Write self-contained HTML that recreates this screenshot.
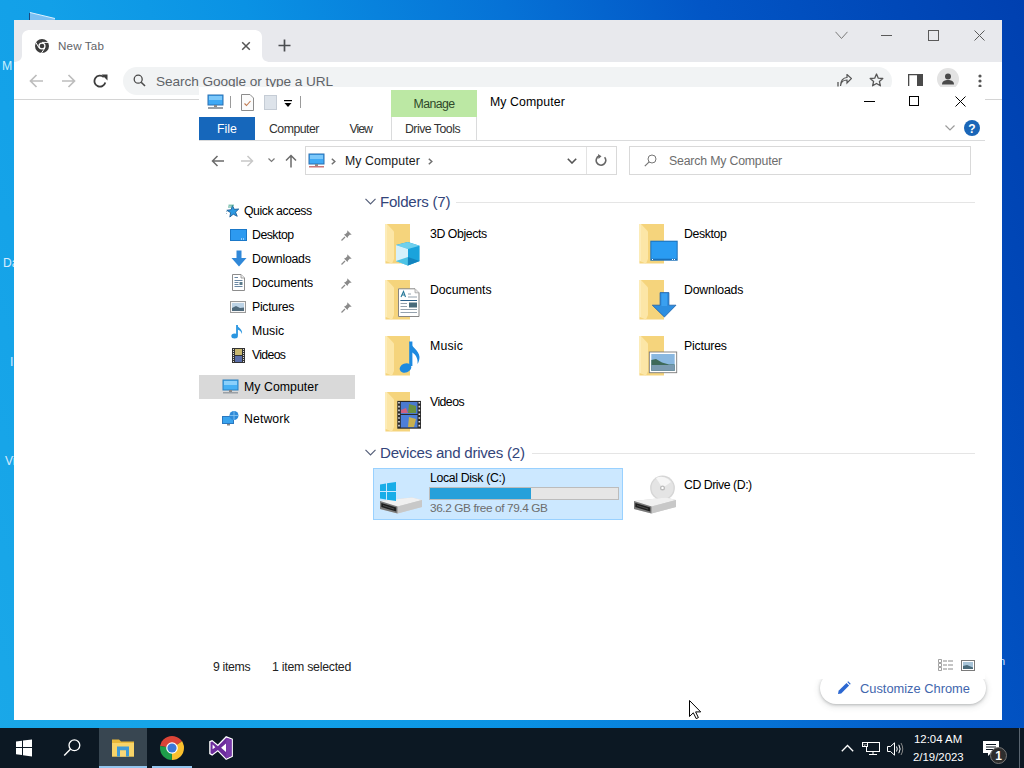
<!DOCTYPE html>
<html><head><meta charset="utf-8">
<style>
*{margin:0;padding:0;box-sizing:border-box}
html,body{width:1024px;height:768px;overflow:hidden}
body{position:relative;font-family:"Liberation Sans",sans-serif;background:linear-gradient(70deg,#1aa8e8 0%,#12a0e8 25%,#0a92e4 40%,#0672d6 60%,#0256c6 75%,#0048b8 90%,#0040b0 100%)}
.a{position:absolute}
.t{position:absolute;white-space:nowrap;font-size:12px;color:#000;line-height:14px}
#chrome{left:14px;top:20px;width:988px;height:700px;background:#fff}
#tabstrip{left:0;top:0;width:988px;height:40px;background:#dfe1e5}
#tab{left:8px;top:9px;width:240px;height:31px;background:#fff;border-radius:8px 8px 0 0}
#toolbar{left:0;top:40px;width:988px;height:39px;background:#fff;border-bottom:1px solid #dadce0}
#omni{left:109px;top:47px;width:870px;height:28px;background:#f1f3f4;border-radius:14px}
#exp{left:199px;top:88px;width:786px;height:591px;background:#fff}
#taskbar{left:0;top:728px;width:1024px;height:40px;background:#0c1823}
</style></head><body>

<!-- desktop labels -->
<div class="t" style="left:2px;top:59px;color:#c8f0ff;font-size:12.3px">M</div>
<div class="t" style="left:3px;top:256px;color:#d8ecff">Da</div>
<div class="t" style="left:10px;top:355px;color:#d8ecff">I</div>
<div class="t" style="left:5px;top:454px;color:#d8ecff">Vi</div>
<div class="t" style="left:999px;top:654px;color:#d8ecff;font-size:11px">n</div>
<svg class="a" style="left:28px;top:11px" width="30" height="10" viewBox="0 0 30 10"><path d="M2 1.5L27 7.5V9H2Z" fill="#7cc0f2"/><path d="M2 1.5L27 7.5" stroke="#d8f0ff" stroke-width="1"/><path d="M1.5 2V9" stroke="#1a4a80" stroke-width="1"/></svg>

<div id="chrome" class="a">
  <div class="a" style="left:0;top:0;width:988px;height:42px;background:#e8e9ed"></div>
  <svg class="a" style="left:0px;top:9px" width="260" height="33" viewBox="0 0 260 33"><path d="M0 33C4 33 8 31 8 26V8C8 3.5 11.5 1 16 1H240C244.5 1 248 3.5 248 8V26C248 31 252 33 256 33Z" fill="#fff"/></svg>
  <div class="a" style="left:0;top:42px;width:988px;height:38px;background:#fff;border-bottom:1px solid #d4d4d4"></div>
  <svg class="a" style="left:20px;top:18px" width="16" height="16" viewBox="0 0 16 16"><circle cx="8" cy="8" r="7" fill="#3c3c3c"/><circle cx="8" cy="8" r="3.6" fill="#fff"/><circle cx="8" cy="8" r="2.3" fill="#3c3c3c"/><path d="M8 4.4H14.6M5 9.8L1.8 4.4M10.9 9.9L7.5 15" stroke="#fff" stroke-width="1"/></svg>
  <div class="t" style="left:44px;top:19.3px;font-size:11.6px;color:#5f6368;letter-spacing:0.167px;">New Tab</div>
  <svg class="a" style="left:227px;top:21px" width="10" height="10" viewBox="0 0 10 10"><path d="M1.2 1.2L8.8 8.8M8.8 1.2L1.2 8.8" stroke="#555" stroke-width="1.5"/></svg>
  <svg class="a" style="left:264px;top:19px" width="13" height="13" viewBox="0 0 13 13"><path d="M6.5 0.5V12.5M0.5 6.5H12.5" stroke="#4a4d50" stroke-width="1.7"/></svg>
  <svg class="a" style="left:821px;top:11px" width="13" height="9" viewBox="0 0 13 9"><path d="M0.5 0.8L6.5 7.5L12.5 0.8" fill="none" stroke="#7a7a7a" stroke-width="1"/></svg>
  <div class="a" style="left:867px;top:15px;width:11px;height:1px;background:#5a5a5a"></div>
  <div class="a" style="left:914px;top:10px;width:11px;height:11px;border:1px solid #5a5a5a"></div>
  <svg class="a" style="left:960px;top:10px" width="11" height="11" viewBox="0 0 11 11"><path d="M0.5 0.5L10.5 10.5M10.5 0.5L0.5 10.5" stroke="#5a5a5a" stroke-width="1"/></svg>
  <svg class="a" style="left:15px;top:54px" width="15" height="14" viewBox="0 0 15 14"><path d="M14 7H1.5M7.5 1L1.5 7L7.5 13" fill="none" stroke="#bdbdbd" stroke-width="1.7"/></svg>
  <svg class="a" style="left:47px;top:54px" width="15" height="14" viewBox="0 0 15 14"><path d="M1 7H13.5M7.5 1L13.5 7L7.5 13" fill="none" stroke="#bdbdbd" stroke-width="1.7"/></svg>
  <svg class="a" style="left:79px;top:54px" width="15" height="14" viewBox="0 0 15 14"><path d="M12.3 8.5A5.5 5.5 0 1 1 10.8 3.2" fill="none" stroke="#3c3c3c" stroke-width="1.8"/><path d="M8.5 0.5H14.5V6.5Z" fill="#3c3c3c"/></svg>
  <div class="a" style="left:109px;top:47px;width:769px;height:28px;background:#f1f3f4;border-radius:14px"></div>
  <svg class="a" style="left:119px;top:54px" width="13" height="13" viewBox="0 0 13 13"><circle cx="5.2" cy="5.2" r="4" fill="none" stroke="#4a4a4a" stroke-width="1.3"/><path d="M8.2 8.2L12 12" stroke="#4a4a4a" stroke-width="1.6"/></svg>
  <div class="t" style="left:142px;top:55.2px;font-size:13.65px;color:#5f6368;letter-spacing:-0.07px;">Search Google or type a URL</div>
  <svg class="a" style="left:823px;top:54px" width="15" height="13" viewBox="0 0 15 13"><path d="M1 12.5V8" stroke="#555" stroke-width="1.3"/><path d="M3.5 12C4 7.5 7 6 10 6V9L14.5 4.5L10 0.5V3.5C6 3.5 3.5 7 3.5 12Z" fill="none" stroke="#555" stroke-width="1.2"/></svg>
  <svg class="a" style="left:855px;top:53px" width="15" height="14" viewBox="0 0 15 14"><path d="M7.5 1L9.3 5.2L13.8 5.5L10.4 8.4L11.4 12.8L7.5 10.5L3.6 12.8L4.6 8.4L1.2 5.5L5.7 5.2Z" fill="none" stroke="#555" stroke-width="1.3" stroke-linejoin="round"/></svg>
  <svg class="a" style="left:894px;top:54px" width="15" height="12" viewBox="0 0 15 12"><path d="M0.5 12V0.5H14.5V12" fill="none" stroke="#4a4a4a" stroke-width="1.6"/><rect x="9" y="0.5" width="5.5" height="11.5" fill="#4a4a4a"/></svg>
  <svg class="a" style="left:923px;top:48px" width="22" height="22" viewBox="0 0 22 22"><circle cx="11" cy="11" r="11" fill="#e3e3e3"/><circle cx="11" cy="8.5" r="3" fill="#4a4a4a"/><path d="M5 16.5C5 13 8 12 11 12C14 12 17 13 17 16.5Z" fill="#4a4a4a"/></svg>
  <svg class="a" style="left:964px;top:54px" width="4" height="14" viewBox="0 0 4 14"><circle cx="2" cy="2" r="1.6" fill="#555"/><circle cx="2" cy="7" r="1.6" fill="#555"/><circle cx="2" cy="12" r="1.6" fill="#555"/></svg>
  <div class="a" style="left:806px;top:652px;width:166px;height:32px;background:#fff;border-radius:16px;box-shadow:0 1px 3px rgba(60,64,67,0.3),0 2px 6px 1px rgba(60,64,67,0.12)"></div>
  <svg class="a" style="left:823px;top:661px" width="14" height="14" viewBox="0 0 14 14"><path d="M1 13L1.6 9.8L9.5 1.9L12.1 4.5L4.2 12.4Z" fill="#2b67d1"/><path d="M10.3 1.1L11.2 0.3L13.7 2.8L12.9 3.7Z" fill="#2b67d1"/></svg>
  <div class="t" style="left:846px;top:662px;font-size:12.85px;color:#4266ad;">Customize Chrome</div>
</div>

<div class="a" style="left:199px;top:87px;width:786px;height:1px;background:#fff"></div>
<div id="exp" class="a">
  <!-- QAT -->
  <svg class="a" style="left:8px;top:6px" width="17" height="16" viewBox="0 0 17 16">
    <rect x="1" y="1" width="15" height="10" fill="#3fa9f5" stroke="#2a6fb0" stroke-width="1"/>
    <rect x="2" y="2" width="13" height="4" fill="#7cc8fa"/>
    <rect x="7" y="11" width="3" height="2" fill="#8a8a8a"/>
    <rect x="1" y="13" width="15" height="2" fill="#9aa0a6"/>
  </svg>
  <div class="a" style="left:31px;top:8px;width:1px;height:12px;background:#9a9a9a"></div>
  <svg class="a" style="left:42px;top:6px" width="13" height="17" viewBox="0 0 13 17">
    <path d="M0.5 0.5H9L12.5 4V16.5H0.5Z" fill="#fbfbfb" stroke="#8c8c8c"/>
    <path d="M3.5 9.5L5.5 11.5L9.5 7" fill="none" stroke="#c07a50" stroke-width="1.1"/>
  </svg>
  <div class="a" style="left:65px;top:7px;width:13px;height:15px;background:#dde3ea;border:1px solid #c5ccd5"></div>
  <svg class="a" style="left:85px;top:11.5px" width="8" height="8" viewBox="0 0 8 8">
    <rect x="0" y="0" width="8" height="1.2" fill="#000"/><path d="M0.5 3H7.5L4 7Z" fill="#000"/>
  </svg>
  <div class="a" style="left:101px;top:8px;width:1px;height:12px;background:#9a9a9a"></div>
  <!-- Manage contextual -->
  <div class="a" style="left:192px;top:2px;width:86px;height:27px;background:#bce8a4"></div>
  <div class="t" style="left:192px;top:8.72px;width:86px;text-align:center;font-size:12.3px;color:#2f4a2a;letter-spacing:-0.6px;">Manage</div>
  <div class="t" style="left:291px;top:6.9px;font-size:12.3px;line-height:14px;color:#000;letter-spacing:0.1px;">My Computer</div>
  <!-- window controls -->
  <div class="a" style="left:665px;top:13px;width:11px;height:1px;background:#000"></div>
  <div class="a" style="left:710px;top:8px;width:10px;height:10px;border:1px solid #000"></div>
  <svg class="a" style="left:756px;top:8px" width="11" height="11" viewBox="0 0 11 11"><path d="M0.5 0.5L10.5 10.5M10.5 0.5L0.5 10.5" stroke="#000" stroke-width="1"/></svg>
  <!-- ribbon tabs -->
  <div class="a" style="left:0;top:29px;width:56px;height:23px;background:#1667bb"></div>
  <div class="t" style="left:0;top:33.72px;width:56px;text-align:center;font-size:12.3px;color:#fff">File</div>
  <div class="t" style="left:70px;top:33.72px;font-size:12.3px;color:#333;letter-spacing:-0.514px;">Computer</div>
  <div class="t" style="left:150.5px;top:33.72px;font-size:12.3px;color:#333;letter-spacing:-1.0px;">View</div>
  <div class="a" style="left:192px;top:29px;width:86px;height:24px;background:#fff;border-left:1px solid #dadbdc;border-right:1px solid #dadbdc"></div>
  <div class="t" style="left:190.5px;top:33.72px;width:86px;text-align:center;font-size:12.3px;color:#333;letter-spacing:-0.5px;">Drive Tools</div>
  <div class="a" style="left:0;top:52px;width:786px;height:1px;background:#dadbdc"></div>
  <!-- nav row -->
  <svg class="a" style="left:12px;top:67px" width="14" height="12" viewBox="0 0 14 12"><path d="M13 6H1.5M6.5 1L1.5 6L6.5 11" fill="none" stroke="#6b6b6b" stroke-width="1.5"/></svg>
  <svg class="a" style="left:41px;top:67px" width="14" height="12" viewBox="0 0 14 12"><path d="M1 6H12.5M7.5 1L12.5 6L7.5 11" fill="none" stroke="#c8c8c8" stroke-width="1.5"/></svg>
  <svg class="a" style="left:69px;top:70px" width="7" height="5" viewBox="0 0 7 5"><path d="M0.5 0.5L3.5 3.5L6.5 0.5" fill="none" stroke="#7a7a7a" stroke-width="1.2"/></svg>
  <svg class="a" style="left:86px;top:66px" width="12" height="14" viewBox="0 0 12 14"><path d="M6 13.5V1.5M1 6.5L6 1.5L11 6.5" fill="none" stroke="#6b6b6b" stroke-width="1.5"/></svg>
  <div class="a" style="left:106px;top:58px;width:312px;height:29px;border:1px solid #d9d9d9"></div>
  <div class="a" style="left:387px;top:59px;width:1px;height:27px;background:#e3e3e3"></div>
  <svg class="a" style="left:109px;top:65px" width="17" height="16" viewBox="0 0 17 16">
    <rect x="1" y="1" width="15" height="10" fill="#3fa9f5" stroke="#2a6fb0" stroke-width="1"/>
    <rect x="2" y="2" width="13" height="4" fill="#7cc8fa"/>
    <rect x="7" y="11" width="3" height="2" fill="#8a8a8a"/>
    <rect x="1" y="13" width="15" height="1.5" fill="#c77"/>
  </svg>
  <svg class="a" style="left:132px;top:70px" width="5" height="7" viewBox="0 0 5 7"><path d="M0.8 0.8L3.8 3.5L0.8 6.2" fill="none" stroke="#707070" stroke-width="1.5"/></svg>
  <div class="t" style="left:146px;top:65.9px;font-size:12.3px;color:#1a1a1a;letter-spacing:0.1px;">My Computer</div>
  <svg class="a" style="left:229px;top:70px" width="5" height="7" viewBox="0 0 5 7"><path d="M0.8 0.8L3.8 3.5L0.8 6.2" fill="none" stroke="#707070" stroke-width="1.5"/></svg>
  <svg class="a" style="left:368px;top:70px" width="10" height="6" viewBox="0 0 10 6"><path d="M0.8 0.8L5 5L9.2 0.8" fill="none" stroke="#555" stroke-width="1.6"/></svg>
  <svg class="a" style="left:396px;top:66px" width="12" height="13" viewBox="0 0 12 13"><path d="M9.6 3.2A4.8 4.8 0 1 1 4 2" fill="none" stroke="#666" stroke-width="1.6"/><path d="M3 0L6.5 2.2L3.5 5Z" fill="#666"/></svg>
  <div class="a" style="left:430px;top:58px;width:342px;height:29px;border:1px solid #d9d9d9"></div>
  <svg class="a" style="left:445px;top:66px" width="13" height="13" viewBox="0 0 13 13"><circle cx="8" cy="5" r="4" fill="none" stroke="#777" stroke-width="1"/><path d="M5.2 7.8L0.8 12.2" stroke="#777" stroke-width="1.2"/></svg>
  <div class="t" style="left:470px;top:65.9px;font-size:12.3px;color:#6d6d6d;letter-spacing:-0.176px;">Search My Computer</div>
  <!-- nav pane -->
  <div class="a" style="left:0;top:287px;width:156px;height:24px;background:#d9d9d9"></div>
  <svg class="a" style="left:27px;top:116px" width="15" height="14" viewBox="0 0 15 14"><path d="M6.34 1.33L8.30 5.35L12.76 5.04L9.54 8.14L11.22 12.28L7.27 10.19L3.85 13.06L4.62 8.66L0.84 6.29L5.26 5.67Z" fill="#2b98e2" stroke="#1d5f98" stroke-width="0.9" stroke-linejoin="round"/><path d="M2.5 1.2H8M2 3H6.5" stroke="#4aa890" stroke-width="1"/><path d="M-1 7.5H1.2M-1 9.5H1" stroke="#8ab0c8" stroke-width="0.8"/></svg>
  <div class="t" style="left:45px;top:115.72px;font-size:12.3px;color:#000;letter-spacing:-0.455px;">Quick access</div>
  <svg class="a" style="left:31px;top:141px" width="17" height="12" viewBox="0 0 17 12"><rect x="0.5" y="0.5" width="16" height="11" fill="#2d9af0" stroke="#1a78c8"/><path d="M11 10H12M13 10H14" stroke="#fff" stroke-width="1"/></svg>
  <div class="t" style="left:53px;top:139.72px;font-size:12.3px;color:#000;letter-spacing:-0.5px;">Desktop</div>
  <svg class="a" style="left:142px;top:142px" width="11" height="11" viewBox="0 0 11 11"><path d="M0.5 10.5L4 7" stroke="#8a8a8a" stroke-width="1.2"/><path d="M3 4.5L6.5 8L7 6.5L9 4.5L10 5L10.5 4.5L6.5 0.5L6 1L6.5 2L4.5 4Z" fill="#8a8a8a"/></svg>
  <svg class="a" style="left:32px;top:162px" width="16" height="17" viewBox="0 0 16 17"><path d="M5.5 0.5H10.5V8H15.5L8 16.5L0.5 8H5.5Z" fill="#3088d8"/></svg>
  <div class="t" style="left:53px;top:163.72px;font-size:12.3px;color:#000;letter-spacing:-0.25px;">Downloads</div>
  <svg class="a" style="left:142px;top:166px" width="11" height="11" viewBox="0 0 11 11"><path d="M0.5 10.5L4 7" stroke="#8a8a8a" stroke-width="1.2"/><path d="M3 4.5L6.5 8L7 6.5L9 4.5L10 5L10.5 4.5L6.5 0.5L6 1L6.5 2L4.5 4Z" fill="#8a8a8a"/></svg>
  <svg class="a" style="left:33px;top:186px" width="13" height="17" viewBox="0 0 13 17"><path d="M0.5 0.5H9L12.5 4V16.5H0.5Z" fill="#fff" stroke="#8d8d8d"/><path d="M9 0.5V4H12.5" fill="#eee" stroke="#8d8d8d" stroke-width="0.8"/><path d="M2.5 3.5H6M2.5 6.5H10.5M2.5 8.5H6.5M2.5 10.5H6.5M2.5 12.5H10.5" stroke="#5a7a99" stroke-width="0.9"/><rect x="7.5" y="8" width="3" height="3" fill="#5a7a8a"/></svg>
  <div class="t" style="left:53px;top:187.72px;font-size:12.3px;color:#000;letter-spacing:-0.125px;">Documents</div>
  <svg class="a" style="left:142px;top:190px" width="11" height="11" viewBox="0 0 11 11"><path d="M0.5 10.5L4 7" stroke="#8a8a8a" stroke-width="1.2"/><path d="M3 4.5L6.5 8L7 6.5L9 4.5L10 5L10.5 4.5L6.5 0.5L6 1L6.5 2L4.5 4Z" fill="#8a8a8a"/></svg>
  <svg class="a" style="left:31px;top:213px" width="16" height="12" viewBox="0 0 16 12"><rect x="0.5" y="0.5" width="15" height="11" fill="#f6f6f6" stroke="#9a9a9a"/><rect x="2" y="2" width="12" height="8" fill="#bcd3e6"/><path d="M2 7L6 5L10 7L14 6.5V10H2Z" fill="#4f6a7c"/></svg>
  <div class="t" style="left:53px;top:211.72px;font-size:12.3px;color:#000;letter-spacing:-0.286px;">Pictures</div>
  <svg class="a" style="left:142px;top:214px" width="11" height="11" viewBox="0 0 11 11"><path d="M0.5 10.5L4 7" stroke="#8a8a8a" stroke-width="1.2"/><path d="M3 4.5L6.5 8L7 6.5L9 4.5L10 5L10.5 4.5L6.5 0.5L6 1L6.5 2L4.5 4Z" fill="#8a8a8a"/></svg>
  <svg class="a" style="left:32px;top:236px" width="13" height="15" viewBox="0 0 13 15"><path d="M6 1V11.5" stroke="#2b96e0" stroke-width="1.8"/><ellipse cx="3.6" cy="12" rx="3.3" ry="2.5" fill="#2b96e0"/><path d="M6 1C7 4 12 5 11 10C10 7 8 6 6.5 5.5Z" fill="#2b96e0"/></svg>
  <div class="t" style="left:53px;top:235.72px;font-size:12.3px;color:#000;">Music</div>
  <svg class="a" style="left:33px;top:260px" width="13" height="15" viewBox="0 0 13 15"><rect x="0" y="0" width="13" height="15" fill="#333"/><rect x="3" y="1" width="7" height="6" fill="#c8b870"/><rect x="3" y="8" width="7" height="6" fill="#5a6ea8"/><path d="M1.5 1V14M11.5 1V14" stroke="#ddd" stroke-width="1" stroke-dasharray="1 1"/></svg>
  <div class="t" style="left:53px;top:259.72px;font-size:12.3px;color:#000;letter-spacing:-0.68px;">Videos</div>
  <svg class="a" style="left:23px;top:291px" width="17" height="16" viewBox="0 0 17 16"><rect x="1" y="1" width="15" height="10" fill="#46b0f4" stroke="#2a80c0"/><rect x="2" y="2" width="13" height="4" fill="#8ad0fb"/><rect x="7" y="11" width="3" height="2" fill="#8a8a8a"/><rect x="1" y="13" width="15" height="1.5" fill="#9aa0a6"/></svg>
  <div class="t" style="left:45px;top:291.9px;font-size:12.3px;color:#000;letter-spacing:0.05px;">My Computer</div>
  <svg class="a" style="left:23px;top:322px" width="17" height="16" viewBox="0 0 17 16"><rect x="0.5" y="6.5" width="11" height="7" fill="#3aa4ee" stroke="#2a78c0"/><rect x="5" y="14" width="3" height="1.5" fill="#888"/><circle cx="12" cy="5.5" r="4.5" fill="#2f8ad8"/><path d="M7.5 5.5H16.5M12 1V10" stroke="#8cc8f4" stroke-width="0.8"/></svg>
  <div class="t" style="left:45px;top:323.72px;font-size:12.3px;color:#000;letter-spacing:0.083px;">Network</div>
  <!-- content -->
  <svg class="a" style="left:166px;top:110px" width="11" height="7" viewBox="0 0 11 7"><path d="M0.5 0.8L5.5 5.8L10.5 0.8" fill="none" stroke="#56607a" stroke-width="1.2"/></svg>
  <div class="t" style="left:181px;top:106.8px;font-size:15.1px;color:#33457a;letter-spacing:-0.25px;">Folders (7)</div>
  <div class="a" style="left:257px;top:114px;width:519px;height:1px;background:#e5e5e5"></div>
  <svg class="a" style="left:179px;top:128px" width="52" height="52" viewBox="0 0 52 52"><path d="M7.4 8H32V47.4H7.4Z" fill="#f5d47c"/><path d="M7.4 8H9L16 15.5V43L14 47.4L7.4 45Z" fill="#fce6a6"/><path d="M7.4 8H8.6V45H7.4Z" fill="#fdf0c4"/><path d="M18 29L29.8 26L41.6 29.8V45L29.8 49.4L18 45Z" fill="#1aa3dc"/><path d="M18 29L29.8 26L41.6 29.8L30 33Z" fill="#6fd0ee"/><path d="M18 29L30 33V49.4L18 45Z" fill="#d6f1fb"/><path d="M18 45L30 41L41.6 45L29.8 49.4Z" fill="#2ab8e0" opacity="0.8"/><path d="M30 41L41.6 45L29.8 49.4Z" fill="#0a6fb0" opacity="0.7"/></svg>
  <div class="t" style="left:231px;top:139px;font-size:12.3px;color:#000;letter-spacing:-0.422px;">3D Objects</div>
  <svg class="a" style="left:433px;top:128px" width="52" height="52" viewBox="0 0 52 52"><path d="M7.4 8H32V47.4H7.4Z" fill="#f5d47c"/><path d="M7.4 8H9L16 15.5V43L14 47.4L7.4 45Z" fill="#fce6a6"/><path d="M7.4 8H8.6V45H7.4Z" fill="#fdf0c4"/><rect x="18.3" y="24.7" width="27.4" height="20" fill="#1b6fb8"/><rect x="19.3" y="25.7" width="25.4" height="17" fill="#2a9cf2"/><path d="M20 43.5H21M40 43.5H41M42 43.5H43" stroke="#fff" stroke-width="1"/></svg>
  <div class="t" style="left:485px;top:139px;font-size:12.3px;color:#000;letter-spacing:-0.367px;">Desktop</div>
  <svg class="a" style="left:179px;top:184px" width="52" height="52" viewBox="0 0 52 52"><path d="M7.4 8H32V47.4H7.4Z" fill="#f5d47c"/><path d="M7.4 8H9L16 15.5V43L14 47.4L7.4 45Z" fill="#fce6a6"/><path d="M7.4 8H8.6V45H7.4Z" fill="#fdf0c4"/><path d="M20.5 16.8H37L41 20.8V44.5H20.5Z" fill="#fff" stroke="#7a7a7a" stroke-width="0.9"/><path d="M37 16.8V20.8H41" fill="#e8e8e8" stroke="#9a9a9a" stroke-width="0.7"/><path d="M23 25L25.5 19.5L27.5 25M23.8 23H27" stroke="#2a7a9a" stroke-width="1.1" fill="none"/><path d="M30 22H33M30 25H39M22.5 28.5H39M22.5 31.5H29M22.5 34.5H29M22.5 37.5H39M22.5 40.5H39" stroke="#7a8a99" stroke-width="0.8"/><path d="M22.5 28.5H39" stroke="#2a5f8a" stroke-width="1"/><rect x="31" y="30.5" width="8" height="5" fill="#486a7a"/></svg>
  <div class="t" style="left:231px;top:195px;font-size:12.3px;color:#000;letter-spacing:-0.074px;">Documents</div>
  <svg class="a" style="left:433px;top:184px" width="52" height="52" viewBox="0 0 52 52"><path d="M7.4 8H32V47.4H7.4Z" fill="#f5d47c"/><path d="M7.4 8H9L16 15.5V43L14 47.4L7.4 45Z" fill="#fce6a6"/><path d="M7.4 8H8.6V45H7.4Z" fill="#fdf0c4"/><path d="M28.1 20.6H36.9V33.2H44L32.4 45L20.3 33.2H28.1Z" fill="#2d8ee0" stroke="#1d60a8" stroke-width="0.8"/><path d="M29.5 21.5H35V34H29.5Z" fill="#3aa0f0"/></svg>
  <div class="t" style="left:485px;top:195px;font-size:12.3px;color:#000;letter-spacing:-0.175px;">Downloads</div>
  <svg class="a" style="left:179px;top:240px" width="52" height="52" viewBox="0 0 52 52"><path d="M7.4 8H32V47.4H7.4Z" fill="#f5d47c"/><path d="M7.4 8H9L16 15.5V43L14 47.4L7.4 45Z" fill="#fce6a6"/><path d="M7.4 8H8.6V45H7.4Z" fill="#fdf0c4"/><path d="M32.8 13.5V38" stroke="#1d8ae0" stroke-width="3.2"/><ellipse cx="27.5" cy="40" rx="6" ry="4.6" fill="#1d8ae0" transform="rotate(-20 27.5 40)"/><path d="M31.5 13.5C33.5 19 41 22 41.5 29C41.5 32 40.5 34.5 39.5 36C40 32 39 27 33.5 24Z" fill="#1d8ae0"/></svg>
  <div class="t" style="left:231px;top:251px;font-size:12.3px;color:#000;letter-spacing:0.2px;">Music</div>
  <svg class="a" style="left:433px;top:240px" width="52" height="52" viewBox="0 0 52 52"><path d="M7.4 8H32V47.4H7.4Z" fill="#f5d47c"/><path d="M7.4 8H9L16 15.5V43L14 47.4L7.4 45Z" fill="#fce6a6"/><path d="M7.4 8H8.6V45H7.4Z" fill="#fdf0c4"/><rect x="17.3" y="24" width="27.4" height="20.7" fill="#fff" stroke="#7a7a7a" stroke-width="0.9"/><rect x="19.3" y="26" width="23.4" height="16.7" fill="#8ab8e0"/><path d="M19.3 32L24 31L30 34.5L37 36.5L42.7 36.5V42.7H19.3Z" fill="#3f6a5a"/><path d="M19.3 37L42.7 37V42.7H19.3Z" fill="#7a9ab0"/></svg>
  <div class="t" style="left:485px;top:251px;font-size:12.3px;color:#000;letter-spacing:-0.215px;">Pictures</div>
  <svg class="a" style="left:179px;top:296px" width="52" height="52" viewBox="0 0 52 52"><path d="M7.4 8H32V47.4H7.4Z" fill="#f5d47c"/><path d="M7.4 8H9L16 15.5V43L14 47.4L7.4 45Z" fill="#fce6a6"/><path d="M7.4 8H8.6V45H7.4Z" fill="#fdf0c4"/><rect x="19.3" y="16.9" width="23.7" height="27.8" fill="#2a2a2a"/><rect x="22.8" y="18" width="16.7" height="12" fill="#4a7ad0"/><rect x="22.8" y="31" width="16.7" height="12.5" fill="#4d7fd8"/><path d="M31 20L38 22V29L30 29Z" fill="#6a9040"/><path d="M23 26L28 24L30 29H23Z" fill="#d06080"/><path d="M31 33L38 35L36 43H30Z" fill="#c8b050"/><path d="M21 18V44M41.3 18V44" stroke="#e0e0e0" stroke-width="1.6" stroke-dasharray="1.6 2.2"/></svg>
  <div class="t" style="left:231px;top:307px;font-size:12.3px;color:#000;letter-spacing:-0.56px;">Videos</div>
  <svg class="a" style="left:166px;top:361px" width="11" height="7" viewBox="0 0 11 7"><path d="M0.5 0.8L5.5 5.8L10.5 0.8" fill="none" stroke="#56607a" stroke-width="1.2"/></svg>
  <div class="t" style="left:181px;top:358.3px;font-size:15.1px;color:#33457a;letter-spacing:-0.25px;">Devices and drives (2)</div>
  <div class="a" style="left:333px;top:365px;width:443px;height:1px;background:#e5e5e5"></div>
  <div class="a" style="left:174px;top:380px;width:250px;height:52px;background:#cce8ff;border:1px solid #99d1ff"></div>
  <svg class="a" style="left:173px;top:378px" width="56" height="56" viewBox="0 0 56 56"><path d="M8 35L40 31.5L50 34V41L25.5 47.4L8 43Z" fill="#d4d4d4"/><path d="M8 35L40 31.5L50 34L25.5 40.5Z" fill="#f0f0f0"/><path d="M25.5 40.5L50 34V41L25.5 47.4Z" fill="#c8c8c8"/><path d="M8 35L25.5 40.5V47.4L8 43Z" fill="#7a7a7a"/><path d="M9.3 37L24.2 41.6V45.6L9.3 41Z" fill="#1e1e1e"/><path d="M11 39.5L22 43" stroke="#555" stroke-width="0.8"/><path d="M8 18.5L14 17.5V25H8Z M15 17.3L24 16V25H15Z M8 26H14V33.5L8 32.6Z M15 26H24V35L15 33.7Z" fill="#18ade8"/></svg>
  <div class="t" style="left:231px;top:383.4px;font-size:12.3px;color:#000;letter-spacing:-0.357px;">Local Disk (C:)</div>
  <div class="a" style="left:230px;top:399px;width:190px;height:13px;background:#e6e6e6;border:1px solid #bcbcbc"></div>
  <div class="a" style="left:231px;top:400px;width:101px;height:11px;background:#26a0da"></div>
  <div class="t" style="left:231px;top:413.41px;font-size:11.8px;color:#6d6d6d;letter-spacing:-0.391px;">36.2 GB free of 79.4 GB</div>
  <svg class="a" style="left:427px;top:378px" width="56" height="56" viewBox="0 0 56 56"><circle cx="36.5" cy="21.9" r="12.4" fill="#d6d6d6"/><circle cx="36.5" cy="21.9" r="11" fill="#e4e4e4"/><path d="M36.5 21.9L30 12A12 12 0 0 1 45 16Z" fill="#f6f6f6"/><circle cx="36.5" cy="21.9" r="2.5" fill="#bbb"/><circle cx="36.5" cy="21.9" r="1.2" fill="#fff"/><path d="M8 35L40 31.5L50 34V41L25.5 47.4L8 43Z" fill="#d4d4d4"/><path d="M8 35L40 31.5L50 34L25.5 40.5Z" fill="#f0f0f0"/><path d="M25.5 40.5L50 34V41L25.5 47.4Z" fill="#c8c8c8"/><path d="M8 35L25.5 40.5V47.4L8 43Z" fill="#7a7a7a"/><path d="M9.3 37L24.2 41.6V45.6L9.3 41Z" fill="#1e1e1e"/><path d="M11 39.5L22 43" stroke="#555" stroke-width="0.8"/></svg>
  <div class="t" style="left:485px;top:390.2px;font-size:12.3px;color:#000;letter-spacing:-0.467px;">CD Drive (D:)</div>
  <div class="t" style="left:14px;top:572px;font-size:12.3px;color:#222;letter-spacing:-0.333px;">9 items</div>
  <div class="t" style="left:73px;top:572px;font-size:12.3px;color:#222;letter-spacing:-0.243px;">1 item selected</div>
  <svg class="a" style="left:739px;top:571px" width="16" height="12" viewBox="0 0 16 12"><path d="M0.5 0.5H3.5V3.5H0.5Z M0.5 4.5H3.5V7.5H0.5Z M0.5 8.5H3.5V11.5H0.5Z" fill="none" stroke="#8a8a8a" stroke-width="0.8"/><path d="M5 2H9M10 2H15M5 6H9M10 6H15M5 10H9M10 10H15" stroke="#8a8a8a" stroke-width="1"/></svg>
  <svg class="a" style="left:762px;top:572px" width="14" height="11" viewBox="0 0 14 11"><rect x="0.5" y="0.5" width="13" height="10" fill="#fff" stroke="#7a7a7a"/><rect x="2" y="2" width="10" height="7" fill="#a8c4d8"/><path d="M2 6L6 5L12 7.5V9H2Z" fill="#4a6a7a"/></svg>
  <svg class="a" style="left:746px;top:37px" width="10" height="6" viewBox="0 0 10 6"><path d="M0.5 0.5L5 5L9.5 0.5" fill="none" stroke="#9b9b9b" stroke-width="1.2"/></svg>
  <svg class="a" style="left:765px;top:32px" width="16" height="16" viewBox="0 0 16 16"><circle cx="8" cy="8" r="8" fill="#1a66b8"/><text x="8" y="12.5" font-family="Liberation Sans" font-weight="bold" font-size="12" fill="#fff" text-anchor="middle">?</text></svg>
</div>

<svg class="a" style="left:688px;top:699px" width="14" height="21" viewBox="0 0 14 21"><path d="M1.5 1.5V17.5L5.3 13.8L8.2 19.6L10.4 18.6L7.6 12.9H12.7Z" fill="#fff" stroke="#000" stroke-width="1" stroke-linejoin="miter"/></svg>
<div id="taskbar" class="a">
  <svg class="a" style="left:15px;top:11px" width="18" height="18" viewBox="0 0 18 18"><path d="M1 2.6L7 1.8V8H1Z M8 1.6L17 0.4V8H8Z M1 9H7V16L1 15.2Z M8 9H17V17.6L8 16.2Z" fill="#fff"/></svg>
  <svg class="a" style="left:63px;top:10px" width="18" height="19" viewBox="0 0 18 19"><circle cx="11.4" cy="7.3" r="5.4" fill="none" stroke="#fff" stroke-width="1.3"/><path d="M7.6 11.1L1.2 17.5" stroke="#fff" stroke-width="1.4"/></svg>
  <div class="a" style="left:99px;top:0;width:48px;height:40px;background:#384651"></div>
  <div class="a" style="left:99px;top:38px;width:48px;height:2px;background:#93c5ee"></div>
  <div class="a" style="left:152px;top:38px;width:40px;height:2px;background:#93c5ee"></div>
  <svg class="a" style="left:111px;top:10px" width="24" height="20" viewBox="0 0 24 20"><path d="M1 1.5H8L10 3.5H23V18.5H1Z" fill="#e8b83a"/><path d="M1 5H23V18.5H1Z" fill="#f8d468"/><path d="M6 8.5H18V18.5H15V12.5H9V18.5H6Z" fill="#3f9ad6"/><rect x="9" y="12.5" width="6" height="6" fill="#f9d878"/></svg>
  <svg class="a" style="left:160px;top:8px" width="24" height="24" viewBox="0 0 24 24"><defs><clipPath id="cc"><circle cx="12" cy="12" r="12"/></clipPath></defs><g clip-path="url(#cc)"><path d="M12 12L-0.80 9.74L-0.11 7.27L1.06 4.98L2.65 2.97L4.61 1.31L6.85 0.06L9.30 -0.72L11.85 -1.00L14.41 -0.78L16.87 -0.05L19.14 1.14L21.14 2.75L22.78 4.73Z" fill="#db4437"/><path d="M12 12L22.78 4.73L23.91 6.80L24.66 9.04L24.99 11.38L24.88 13.73L24.36 16.04L23.42 18.20L22.11 20.17L20.47 21.86L18.55 23.23L16.41 24.23L14.13 24.82L11.77 25.00Z" fill="#fbc02d"/><path d="M12 12L11.77 25.00L9.91 24.83L8.09 24.40L6.35 23.71L4.73 22.78L3.26 21.62L1.97 20.27L0.89 18.74L0.03 17.08L-0.57 15.31L-0.92 13.47L-0.99 11.60L-0.80 9.74Z" fill="#1e9e4a"/></g><circle cx="12" cy="12" r="5.8" fill="#fff"/><circle cx="12" cy="12" r="4.6" fill="#3b78d8"/></svg>
  <svg class="a" style="left:208px;top:7px" width="26" height="26" viewBox="0 0 26 26"><path d="M1.2 6.3L4.2 4.9L9.8 9.6L18 1.1L24.9 3.7V21.8L18 25L9.8 16.6L4.2 20.8L1.2 18.9Z" fill="#fff"/><path d="M2.5 7.1L4.3 6.4L9.9 11.3L18.2 2.7L23.6 4.6V21L18.2 23.4L9.9 14.9L4.3 19.3L2.5 18.2Z M18 8.6L13.1 12.8L18 17Z M4.6 9.5V14.2L7.3 12.2Z" fill="#6c2c9c" fill-rule="evenodd"/><path d="M18.2 2.7L23.6 4.6V21L18.2 23.4Z" fill="#7a3aaa"/></svg>
  <svg class="a" style="left:841px;top:16px" width="13" height="8" viewBox="0 0 13 8"><path d="M0.8 7.2L6.5 1.5L12.2 7.2" fill="none" stroke="#fff" stroke-width="1.3"/></svg>
  <svg class="a" style="left:862px;top:14px" width="18" height="14" viewBox="0 0 18 14"><rect x="4.5" y="0.5" width="13" height="9" fill="none" stroke="#fff" stroke-width="1"/><rect x="0.5" y="0.5" width="5" height="4" fill="#0b1620" stroke="#fff" stroke-width="1"/><path d="M1.5 2.2L3 3.5L4.5 2" stroke="#fff" stroke-width="0.8" fill="none"/><path d="M11 9.5V12.5M7 12.5H15" stroke="#fff" stroke-width="1"/></svg>
  <svg class="a" style="left:887px;top:14px" width="17" height="14" viewBox="0 0 17 14"><path d="M0.5 4.5H3.5L7.5 0.8V13.2L3.5 9.5H0.5Z" fill="none" stroke="#fff" stroke-width="1"/><path d="M9.5 4.5Q11 7 9.5 9.5M11.8 2.8Q14.5 7 11.8 11.2" fill="none" stroke="#fff" stroke-width="1"/><path d="M14 1Q17.5 7 14 13" fill="none" stroke="#888" stroke-width="1"/></svg>
  <div class="t" style="left:914px;top:3.55px;font-size:11.4px;color:#fff;">12:04 AM</div>
  <div class="t" style="left:913px;top:21.55px;font-size:11.4px;color:#fff;">2/19/2023</div>
  <svg class="a" style="left:982px;top:12px" width="26" height="24" viewBox="0 0 26 24"><path d="M1 1H17V13H9L6 16V13H1Z" fill="#fff"/><path d="M4 4.5H14M4 7H14M4 9.5H14" stroke="#0b1620" stroke-width="1"/><circle cx="16.5" cy="15.5" r="8" fill="#2e2e2e" stroke="#777" stroke-width="1"/><text x="16.5" y="20" font-family="Liberation Sans" font-weight="bold" font-size="12" fill="#fff" text-anchor="middle">1</text></svg>
  <div class="a" style="left:1019px;top:0;width:1px;height:40px;background:#5a6570"></div>
</div>

</body></html>
